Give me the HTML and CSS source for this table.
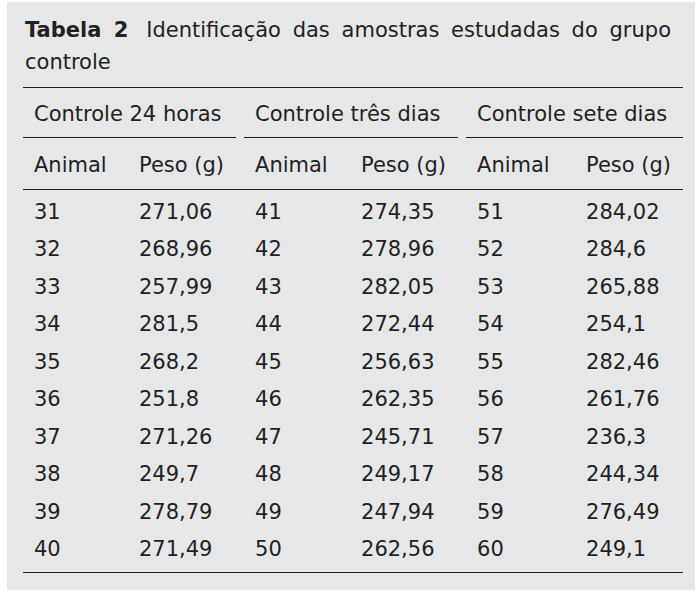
FILE: index.html
```html
<!DOCTYPE html>
<html lang="pt">
<head>
<meta charset="utf-8">
<link rel="stylesheet" href="styles.css">
</head>
<body>
<div class="panel">
  <p class="caption"><b class="label">Tabela 2</b> Identificação das amostras estudadas do grupo controle</p>
  <table class="data">
    <colgroup>
      <col class="c1"><col class="c2"><col class="c3"><col class="c4"><col class="c5"><col class="c6">
    </colgroup>
    <thead>
      <tr class="groups">
        <th colspan="2"><div class="g g-gap">Controle 24 horas</div></th>
        <th colspan="2"><div class="g g-gap">Controle três dias</div></th>
        <th colspan="2"><div class="g">Controle sete dias</div></th>
      </tr>
      <tr class="cols">
        <th>Animal</th><th>Peso (g)</th>
        <th>Animal</th><th>Peso (g)</th>
        <th>Animal</th><th>Peso (g)</th>
      </tr>
    </thead>
    <tbody>
      <tr><td>31</td><td>271,06</td><td>41</td><td>274,35</td><td>51</td><td>284,02</td></tr>
      <tr><td>32</td><td>268,96</td><td>42</td><td>278,96</td><td>52</td><td>284,6</td></tr>
      <tr><td>33</td><td>257,99</td><td>43</td><td>282,05</td><td>53</td><td>265,88</td></tr>
      <tr><td>34</td><td>281,5</td><td>44</td><td>272,44</td><td>54</td><td>254,1</td></tr>
      <tr><td>35</td><td>268,2</td><td>45</td><td>256,63</td><td>55</td><td>282,46</td></tr>
      <tr><td>36</td><td>251,8</td><td>46</td><td>262,35</td><td>56</td><td>261,76</td></tr>
      <tr><td>37</td><td>271,26</td><td>47</td><td>245,71</td><td>57</td><td>236,3</td></tr>
      <tr><td>38</td><td>249,7</td><td>48</td><td>249,17</td><td>58</td><td>244,34</td></tr>
      <tr><td>39</td><td>278,79</td><td>49</td><td>247,94</td><td>59</td><td>276,49</td></tr>
      <tr><td>40</td><td>271,49</td><td>50</td><td>262,56</td><td>60</td><td>249,1</td></tr>
    </tbody>
  </table>
</div>
</body>
</html>
```
FILE: styles.css
```css
html, body {
  margin: 0;
  padding: 0;
  background: #ffffff;
}
body {
  font-family: "DejaVu Sans", "Open Sans", sans-serif;
  color: #231f20;
}
.panel {
  margin: 2px 5px 6px 7px;
  width: 688px;
  height: 588px;
  box-sizing: border-box;
  background: #e6e7e9;
  padding: 12px 12px 0 16px;
}
.caption {
  margin: 0 0 9px 0;
  padding-left: 2px;
  width: 646px;
  font-size: 21px;
  line-height: 32px;
  text-align: justify;
}
.label {
  font-weight: 700;
  margin-right: 6px;
}
.data {
  width: 660px;
  border-collapse: collapse;
  table-layout: fixed;
  font-size: 21px;
}
.c1 { width: 105px; }
.c2 { width: 116px; }
.c3 { width: 106px; }
.c4 { width: 116px; }
.c5 { width: 109px; }
.c6 { width: 108px; }
.data th,
.data td {
  box-sizing: border-box;
  white-space: nowrap;
}
.data th {
  font-weight: normal;
  text-align: left;
  padding: 0;
}
.groups th {
  border-top: 1.5px solid #231f20;
  height: 50px;
  vertical-align: top;
}
.g {
  height: 49.5px;
  box-sizing: border-box;
  padding: 4px 0 0 11px;
  line-height: 45px;
  border-bottom: 1.5px solid #231f20;
}
.g-gap {
  margin-right: 8px;
}
.cols th {
  height: 51px;
  padding: 4px 0 0 11px;
  line-height: 47px;
  border-bottom: 1.5px solid #231f20;
}
.data td {
  padding: 0 0 0 11px;
  line-height: 37.5px;
  height: 37.5px;
}
.data tbody tr:first-child td {
  padding-top: 4px;
}
.data tbody tr:last-child td {
  padding-bottom: 3px;
  border-bottom: 1.5px solid #231f20;
}
```
